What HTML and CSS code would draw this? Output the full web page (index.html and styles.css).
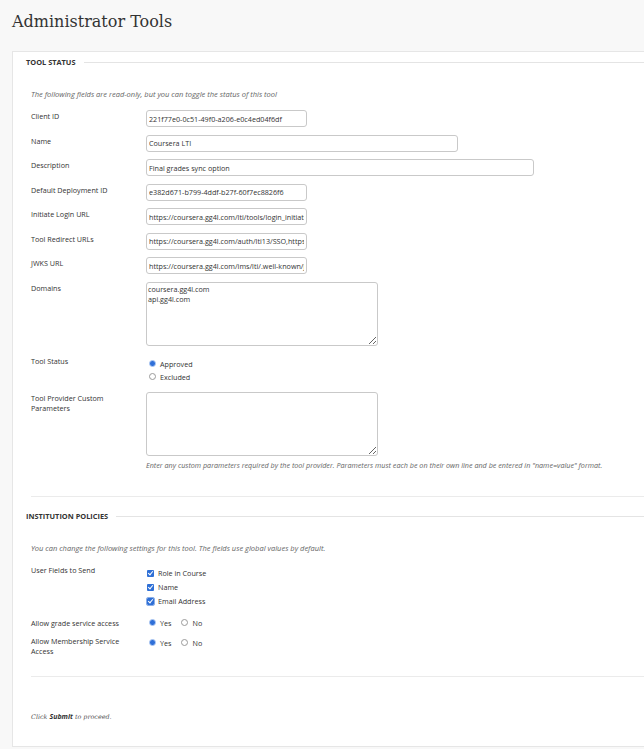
FILE: index.html
```html
<!DOCTYPE html>
<html lang="en">
<head>
<meta charset="utf-8">
<title>Administrator Tools</title>
<link rel="stylesheet" href="styles.css">
</head>
<body>
<header class="page-header">
  <h1 class="page-title">Administrator Tools</h1>
</header>
<main class="panel">
  <section class="section">
    <h2 class="section-title"><span>TOOL STATUS</span></h2>
    <p class="intro">The following fields are read-only, but you can toggle the status of this tool</p>

    <div class="row">
      <div class="label">Client ID</div>
      <div class="field"><input class="text w-short" type="text" value="221f77e0-0c51-49f0-a206-e0c4ed04f6df" readonly></div>
    </div>
    <div class="row">
      <div class="label">Name</div>
      <div class="field"><input class="text w-mid" type="text" value="Coursera LTI" readonly></div>
    </div>
    <div class="row">
      <div class="label">Description</div>
      <div class="field"><input class="text w-long" type="text" value="Final grades sync option" readonly></div>
    </div>
    <div class="row">
      <div class="label">Default Deployment ID</div>
      <div class="field"><input class="text w-short" type="text" value="e382d671-b799-4ddf-b27f-60f7ec8826f6" readonly></div>
    </div>
    <div class="row">
      <div class="label">Initiate Login URL</div>
      <div class="field"><input class="text w-short" type="text" value="https://coursera.gg4l.com/lti/tools/login_initiations" readonly></div>
    </div>
    <div class="row">
      <div class="label">Tool Redirect URLs</div>
      <div class="field"><input class="text w-short" type="text" value="https://coursera.gg4l.com/auth/lti13/SSO,https://coursera.gg4l.com" readonly></div>
    </div>
    <div class="row">
      <div class="label">JWKS URL</div>
      <div class="field"><input class="text w-short" type="text" value="https://coursera.gg4l.com/ims/lti/.well-known/jwks.json" readonly></div>
    </div>
    <div class="row">
      <div class="label">Domains</div>
      <div class="field"><textarea class="area" readonly>coursera.gg4l.com
api.gg4l.com</textarea></div>
    </div>
    <div class="row row-status">
      <div class="label label-status">Tool Status</div>
      <div class="field options-stack">
        <label class="opt"><input class="radio" type="radio" name="status" checked><span>Approved</span></label>
        <label class="opt"><input class="radio" type="radio" name="status"><span>Excluded</span></label>
      </div>
    </div>
    <div class="row">
      <div class="label">Tool Provider Custom<br>Parameters</div>
      <div class="field">
        <textarea class="area"></textarea>
        <p class="help">Enter any custom parameters required by the tool provider. Parameters must each be on their own line and be entered in "name=value" format.</p>
      </div>
    </div>
  </section>

  <hr class="divider">

  <section class="section section-2">
    <h2 class="section-title"><span>INSTITUTION POLICIES</span></h2>
    <p class="intro">You can change the following settings for this tool. The fields use global values by default.</p>

    <div class="row row-checks">
      <div class="label">User Fields to Send</div>
      <div class="field checks">
        <label class="chk"><input class="check" type="checkbox" checked><span>Role in Course</span></label>
        <label class="chk"><input class="check" type="checkbox" checked><span>Name</span></label>
        <label class="chk"><input class="check focus" type="checkbox" checked><span>Email Address</span></label>
      </div>
    </div>
    <div class="row row-inline">
      <div class="label">Allow grade service access</div>
      <div class="field inline-opts">
        <label class="opt"><input class="radio" type="radio" name="grade" checked><span>Yes</span></label>
        <label class="opt"><input class="radio" type="radio" name="grade"><span>No</span></label>
      </div>
    </div>
    <div class="row row-inline2">
      <div class="label">Allow Membership Service<br>Access</div>
      <div class="field inline-opts">
        <label class="opt"><input class="radio" type="radio" name="member" checked><span>Yes</span></label>
        <label class="opt"><input class="radio" type="radio" name="member"><span>No</span></label>
      </div>
    </div>
  </section>

  <hr class="divider divider-2">

  <p class="submit-note">Click <strong>Submit</strong> to proceed.</p>
</main>
</body>
</html>
```
FILE: styles.css
```css
* { box-sizing: border-box; }

html, body {
  margin: 0;
  padding: 0;
  background: #f8f8f8;
  overflow: hidden;
}

body {
  font-family: "Open Sans", "Noto Sans", sans-serif;
  font-size: 7.2px;
  color: #333;
}

.page-header {
  height: 51px;
  padding: 12px 0 0 12px;
}

.page-title {
  margin: 0;
  font-family: "DejaVu Serif", serif;
  font-weight: normal;
  font-size: 16px;
  line-height: 20px;
  color: #333;
}

.panel {
  margin-left: 12px;
  background: #fff;
  border-top: 1px solid #e6e6e6;
  border-left: 1px solid #e6e6e6;
  border-bottom: 1px solid #e6e6e6;
  padding: 5px 0 24px 13px;
}

.section-title {
  display: flex;
  align-items: center;
  margin: 0;
  font-size: 7.4px;
  font-weight: bold;
  line-height: 10px;
  color: #333;
}

.section-title::after {
  content: "";
  flex: 1;
  height: 1px;
  background: #e4e4e4;
  margin-left: 8px;
}

.intro {
  margin: 22px 0 11px 5px;
  font-size: 7.5px;
  font-style: italic;
  color: #666;
  line-height: 10px;
}

.row {
  display: flex;
  margin: 0 0 7.5px 5px;
}

.label {
  width: 115px;
  flex: none;
  padding-top: 1px;
  line-height: 10px;
  color: #333;
}

.field {
  flex: none;
}

.text {
  display: block;
  height: 17px;
  padding: 0 2px;
  border: 1px solid #c9c9c9;
  border-radius: 3px;
  font-family: "Open Sans", "Noto Sans", sans-serif;
  font-size: 7.2px;
  color: #333;
  background: #fff;
  outline: none;
}

.w-short { width: 161px; }
.w-mid { width: 312px; }
.w-long { width: 388px; }

.area {
  display: block;
  width: 232px;
  height: 64px;
  padding: 1px 1px;
  border: 1px solid #c9c9c9;
  border-radius: 3px;
  font-family: "Open Sans", "Noto Sans", sans-serif;
  font-size: 7.2px;
  line-height: 10px;
  color: #333;
  background: #fff;
  outline: none;
}

.label-status { padding-top: 3px; }

.options-stack {
  padding: 4px 0 1.5px 3px;
}

.opt {
  display: flex;
  align-items: center;
  height: 13px;
  line-height: 10px;
  color: #333;
}

.radio {
  appearance: none;
  -webkit-appearance: none;
  width: 7px;
  height: 7px;
  margin: 0 4px 0 0;
  border: 1px solid #9a9a9a;
  border-radius: 50%;
  background: #fff;
  flex: none;
}

.radio:checked {
  border-color: #8fb3ec;
  background: radial-gradient(circle, #2f6fd8 0, #2f6fd8 2.2px, #6f9be4 2.6px, #bcd2f5 3.5px);
}

.help {
  margin: 4px 0 0 0;
  font-style: italic;
  color: #666;
  line-height: 10px;
  white-space: nowrap;
}

.divider {
  margin: 26px 0 0 5px;
  border: 0;
  height: 1px;
  background: #ebebeb;
}

.section-2 {
  padding-top: 14px;
}

.checks {
  padding: 2px 0 0 1px;
}

.chk {
  display: flex;
  align-items: center;
  height: 14px;
  line-height: 10px;
}

.check {
  appearance: none;
  -webkit-appearance: none;
  position: relative;
  width: 7px;
  height: 7px;
  margin: 0 4px 0 0;
  border-radius: 1px;
  background: #2e6fd6;
  flex: none;
}

.check::after {
  content: "";
  position: absolute;
  left: 2px;
  top: 0.5px;
  width: 2px;
  height: 4px;
  border: solid #fff;
  border-width: 0 1.2px 1.2px 0;
  transform: rotate(40deg);
}

.check.focus {
  outline: 1px solid #8aaee8;
  outline-offset: 0.5px;
}

.row-checks { margin-bottom: 9px; }

.inline-opts {
  display: flex;
  gap: 10px;
  padding: 0 0 0 3px;
}

.row-inline { margin-bottom: 6px; }
.row-inline .inline-opts { margin-top: -1px; }
.row-inline2 .label { line-height: 10.5px; padding-top: 0.5px; }
.row-inline2 .inline-opts { margin-top: 1px; }

.divider-2 {
  margin-top: 19px;
}

.submit-note {
  margin: 35px 0 0 5px;
  font-family: "DejaVu Serif", serif;
  font-style: italic;
  font-size: 6.4px;
  line-height: 10px;
  color: #555;
}

.submit-note strong {
  font-family: "Open Sans", "Noto Sans", sans-serif;
  font-weight: bold;
  font-style: italic;
  font-size: 7px;
  color: #333;
}
```
